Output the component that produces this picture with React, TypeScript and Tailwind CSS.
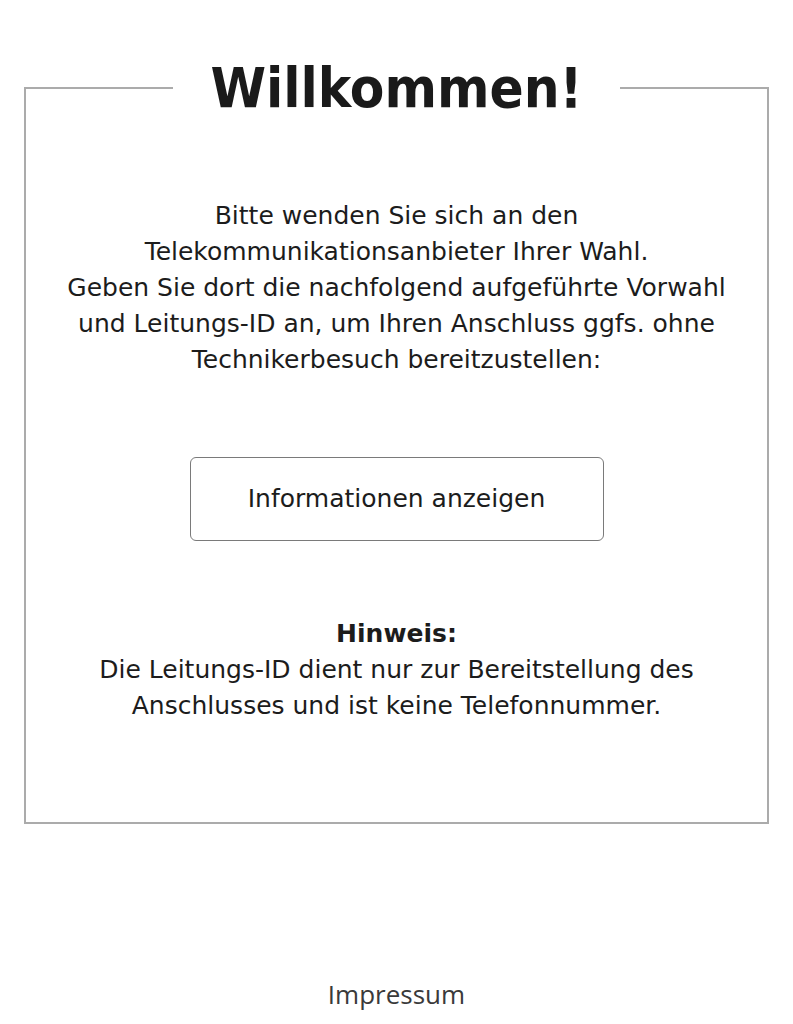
import React from "react";

export default function App() {
  const body = { fontFamily: '"DejaVu Sans", sans-serif' };
  const title = { fontFamily: '"DejaVu Sans Condensed", "DejaVu Sans", sans-serif' };
  return (
    <div className="min-h-[1024px] w-full bg-white text-[#1c1c1c]" style={body}>
      <div className="px-6 pt-14">
        <fieldset className="border-2 border-[#ababab] px-4 pb-[98px] text-center">
          <legend
            className="mx-auto px-[38px] text-[56px] font-bold leading-[64px] text-[#1a1a1a]"
            style={title}
          >
            Willkommen!
          </legend>
          <p className="mt-[78px] text-[25px] leading-[36px]">
            Bitte wenden Sie sich an den
            <br />
            Telekommunikationsanbieter Ihrer Wahl.
            <br />
            Geben Sie dort die nachfolgend aufgeführte Vorwahl
            <br />
            und Leitungs-ID an, um Ihren Anschluss ggfs. ohne
            <br />
            Technikerbesuch bereitzustellen:
          </p>
          <div className="mt-[79px] flex justify-center">
            <button className="flex h-[84px] w-[414px] items-center justify-center rounded-md border border-[#7a7a7a] bg-white text-[25px] text-[#1c1c1c]">
              Informationen anzeigen
            </button>
          </div>
          <div className="mt-[75px] text-[25px] leading-[36px]">
            <div className="font-bold">Hinweis:</div>
            <div>
              Die Leitungs-ID dient nur zur Bereitstellung des
              <br />
              Anschlusses und ist keine Telefonnummer.
            </div>
          </div>
        </fieldset>
      </div>
      <div
        className="mt-[152px] text-center text-[26px] leading-[36px] text-[#3a3a3a]"
        style={{ fontFamily: '"Open Sans", sans-serif' }}
      >
        Impressum
      </div>
    </div>
  );
}
